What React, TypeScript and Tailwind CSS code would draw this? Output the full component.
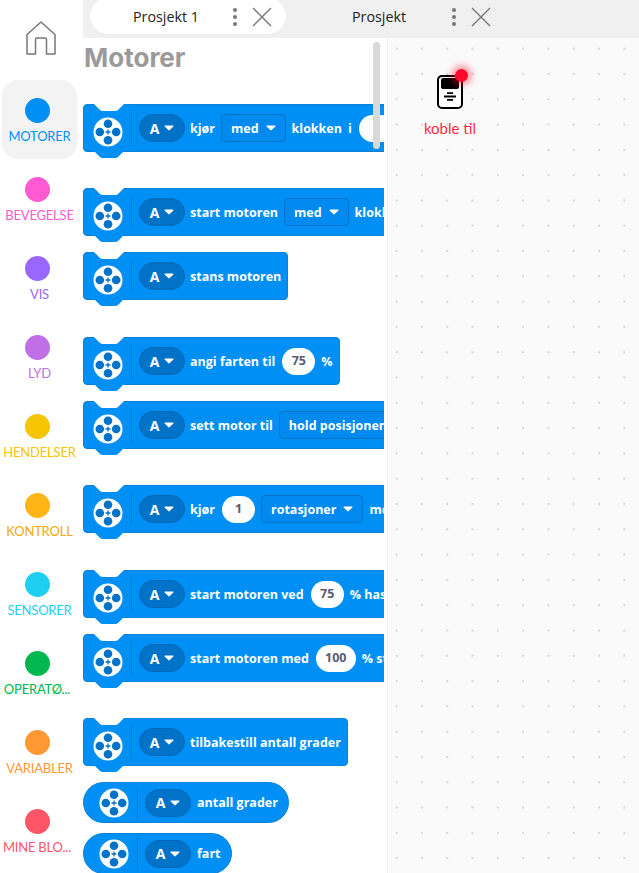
const categories = [
  { label: "MOTORER", dot: "bg-[#0090f5]", text: "text-[#0090f5]", active: true },
  { label: "BEVEGELSE", dot: "bg-[#ff5ad2]", text: "text-[#ff5ad2]" },
  { label: "VIS", dot: "bg-[#9966ff]", text: "text-[#9966ff]" },
  { label: "LYD", dot: "bg-[#c06fe6]", text: "text-[#c06fe6]" },
  { label: "HENDELSER", dot: "bg-[#f5c402]", text: "text-[#f5c402]" },
  { label: "KONTROLL", dot: "bg-[#ffb515]", text: "text-[#f5a80a]" },
  { label: "SENSORER", dot: "bg-[#1fcff1]", text: "text-[#1fcff1]" },
  { label: "OPERATØ...", dot: "bg-[#00b84f]", text: "text-[#00b84f] mr-[5px]" },
  { label: "VARIABLER", dot: "bg-[#ff9933]", text: "text-[#ff9933]" },
  { label: "MINE BLO...", dot: "bg-[#ff5566]", text: "text-[#ff5566] mr-[5px]" },
]

const Wheel = ({ className = "" }: { className?: string }) => (
  <svg width="30" height="30" viewBox="0 0 30 30" className={`shrink-0 ${className}`}>
    <circle cx="15" cy="15" r="14.5" fill="#fff" />
    <circle cx="15" cy="6.800" r="4.300" fill="#0073c9" />
    <circle cx="15" cy="23.200" r="4.300" fill="#0073c9" />
    <circle cx="6.800" cy="15" r="4.300" fill="#0073c9" />
    <circle cx="23.200" cy="15" r="4.300" fill="#0073c9" />
    <path d="M15 12.500v5M12.500 15h5" stroke="#0073c9" strokeWidth="1.300" />
  </svg>
)

const Caret = () => (
  <svg width="10" height="6" viewBox="0 0 10 6" className="shrink-0">
    <path d="M1 .5h8a.6.6 0 0 1 .4 1L5.400 5.300a.6.6 0 0 1-.8 0L.6 1.500a.6.6 0 0 1 .4-1z" fill="#fff" />
  </svg>
)

const PortPill = () => (
  <div className="-mr-[1px] flex h-[28px] w-[46px] shrink-0 items-center justify-center gap-[5px] rounded-full border border-[#0068b5] bg-[#0073c9]">
    <span className="text-[14px]">A</span>
    <Caret />
  </div>
)

const Select = ({ value }: { value: string }) => (
  <div className="flex h-[28px] shrink-0 items-center gap-[7px] whitespace-nowrap rounded-[4px] border border-[#0073c9] bg-[#008af0] px-[9px]">
    <span className="pt-[2px]">{value}</span>
    <Caret />
  </div>
)

const Num = ({ value, w = "w-[33px]" }: { value: string; w?: string }) => (
  <div className={`ml-[1px] flex h-[27px] shrink-0 items-center justify-center rounded-full bg-white text-[12.500px] text-[#575e75] ${w}`}>
    {value}
  </div>
)

const Block = ({ className = "", tab = true, children }: { className?: string; tab?: boolean; children: React.ReactNode }) => (
  <div className={`relative z-0 flex h-[48px] w-max items-center rounded-[4px] border border-[#0b80d6] bg-[#0090f5] pl-[9px] pr-[6px] text-[12.500px] font-bold text-white ${className}`}>
    <svg width="30" height="8" viewBox="0 0 30 8" className="absolute left-[10px] top-[-1px]">
      <path d="M0 0 L6 6 Q7 7 9 7 H21 Q23 7 24 6 L30 0 Z" fill="#fff" />
    </svg>
    {tab && (
      <svg width="30" height="8" viewBox="0 0 30 8" className="absolute left-[10px] top-[46px]">
        <path d="M0 0 L6 6 Q7 7 9 7 H21 Q23 7 24 6 L30 0 Z" fill="#0090f5" />
      </svg>
    )}
    <Wheel className="mt-[7px]" />
    <div className="ml-[8px] mr-[7px] h-[34px] w-px shrink-0 bg-[#0b80d6]" />
    <div className="flex items-center gap-[6px] whitespace-nowrap [&>span]:pt-[3px]">{children}</div>
  </div>
)

const Reporter = ({ className = "", children }: { className?: string; children: React.ReactNode }) => (
  <div className={`flex h-[41px] w-max items-center rounded-full border border-[#0b80d6] bg-[#0090f5] pl-[15px] pr-[10px] text-[12.500px] font-bold text-white ${className}`}>
    <Wheel />
    <div className="ml-[8px] mr-[7px] h-[34px] w-px shrink-0 bg-[#0b80d6]" />
    <div className="flex items-center gap-[6px] whitespace-nowrap [&>span]:ml-[1px] [&>span]:pt-[2px]">{children}</div>
  </div>
)

const Tab = ({ title, active }: { title: string; active?: boolean }) => (
  <div className={`-mt-[3px] flex h-[38px] w-[198px] shrink-0 items-center rounded-full pt-[2px] ${active ? "border border-[#ececec] bg-white" : ""}`}>
    <span className="w-[140px] pl-[43px] text-left text-[14.300px] text-[#222]">{title}</span>
    <svg width="8" height="20" viewBox="0 0 8 20" className="ml-[1px] text-[#777]">
      <circle cx="4" cy="3" r="2" fill="currentColor" />
      <circle cx="4" cy="10" r="2" fill="currentColor" />
      <circle cx="4" cy="17" r="2" fill="currentColor" />
    </svg>
    <svg width="20" height="20" viewBox="0 0 20 20" className="ml-[13px] text-[#777]">
      <path d="M1 1l18 18M19 1L1 19" stroke="currentColor" strokeWidth="1.400" fill="none" />
    </svg>
  </div>
)

export default function App() {
  return (
    <div className="flex h-[873px] w-[639px] overflow-hidden bg-white font-['Open_Sans',sans-serif]">
      {/* Kategorier */}
      <aside className="flex w-[83px] shrink-0 flex-col font-['Lato',sans-serif]">
        <div className="flex h-[80px] shrink-0 items-start pl-[26px] pt-[21px]">
          <svg width="30" height="34" viewBox="0 0 30 34" fill="none" stroke="#777" strokeWidth="1.500">
            <path d="M1 33V13.500L15 1l14 12.500V33h-8.500V18.500a1.500 1.500 0 0 0-1.500-1.500h-8a1.500 1.500 0 0 0-1.500 1.500V33z" strokeLinejoin="round" />
          </svg>
        </div>
        {categories.map((c) => (
          <div
            key={c.label}
            className={`ml-[2px] flex h-[79px] w-[75px] shrink-0 flex-col items-center rounded-[16px] pt-[18px] ${c.active ? "bg-[#f3f3f3]" : ""}`}
          >
            <div className={`mr-[4px] h-[25px] w-[25px] rounded-full ${c.dot}`} />
            <div className={`mt-[4px] whitespace-nowrap text-center text-[13px] leading-[18px] tracking-[-0.2px] ${c.text}`}>{c.label}</div>
          </div>
        ))}
      </aside>

      <div className="flex min-w-0 flex-1 flex-col">
        {/* Faner */}
        <div className="flex h-[38px] shrink-0 gap-[22px] overflow-hidden bg-[#f0f0f0] pl-[6px]">
          <Tab title="Prosjekt 1" active />
          <Tab title="Prosjekt" />
        </div>

        <div className="flex min-h-0 flex-1">
          {/* Blokkpalett */}
          <div className="relative w-[305px] shrink-0 border-r border-[#f0f0f0]">
            <div className="h-full w-[301px] overflow-hidden">
              <h1 className="ml-[1px] mt-[2px] h-[64px] text-[26px] font-bold leading-[36px] text-[#9a9a9a] font-['Inter',sans-serif]">Motorer</h1>
              <Block>
                <PortPill />
                <span>kjør</span>
                <Select value="med" />
                <span>klokken</span>
                <span>i</span>
                <Num value="1" w="w-[36px]" />
              </Block>
              <Block className="mt-[36px]">
                <PortPill />
                <span>start motoren</span>
                <Select value="med" />
                <span>klokken</span>
              </Block>
              <Block className="mt-[16px]">
                <PortPill />
                <span>stans motoren</span>
              </Block>
              <Block className="mt-[37px]">
                <PortPill />
                <span>angi farten til</span>
                <Num value="75" />
                <span>%</span>
              </Block>
              <Block className="mt-[16px]">
                <PortPill />
                <span>sett motor til</span>
                <Select value="hold posisjonen" />
              </Block>
              <Block className="mt-[36px]">
                <PortPill />
                <span>kjør</span>
                <Num value="1" />
                <Select value="rotasjoner" />
                <span>med</span>
              </Block>
              <Block className="mt-[37px]">
                <PortPill />
                <span>start motoren ved</span>
                <Num value="75" />
                <span>% hastighet</span>
              </Block>
              <Block className="mt-[16px]">
                <PortPill />
                <span>start motoren med</span>
                <Num value="100" w="w-[40px]" />
                <span>% styrke</span>
              </Block>
              <Block className="mt-[36px]">
                <PortPill />
                <span>tilbakestill antall grader</span>
              </Block>
              <Reporter className="mt-[16px]">
                <PortPill />
                <span>antall grader</span>
              </Reporter>
              <Reporter className="mt-[10px]">
                <PortPill />
                <span>fart</span>
              </Reporter>
            </div>
            <div className="absolute left-[290px] top-[4px] h-[107px] w-[7px] rounded-full bg-[#d9d9d9]" />
          </div>

          {/* Arbeidsflate */}
          <div className="flex-1 bg-[#fafafa] bg-[radial-gradient(#d6d6d6_0.8px,transparent_1px)] bg-[length:25.300px_25.300px] bg-[position:-4px_-2px] pl-[35px] pt-[37px]">
            <div className="flex w-[54px] flex-col items-center">
              <div className="relative h-[34px] w-[26px] rounded-[5px] border-2 border-black bg-white">
                <div className="mx-auto mt-[1px] h-[11px] w-[18px] rounded-[2px] bg-black" />
                <svg width="12" height="9" viewBox="0 0 12 9" className="mx-auto mt-[3px]">
                  <path d="M3 1.200h6M0 4.500h12M3 7.800h6" stroke="#000" strokeWidth="1.800" />
                </svg>
                <div className="absolute left-[16px] top-[-8px] h-[13px] w-[13px] rounded-full bg-[#ff0a2a] shadow-[0_0_6px_4px_rgba(255,20,50,0.4)]" />
              </div>
              <span className="mt-[9px] whitespace-nowrap font-['Lato',sans-serif] text-[15px] leading-[20px] text-[#ff2a47]">koble til</span>
            </div>
          </div>
        </div>
      </div>
    </div>
  )
}
